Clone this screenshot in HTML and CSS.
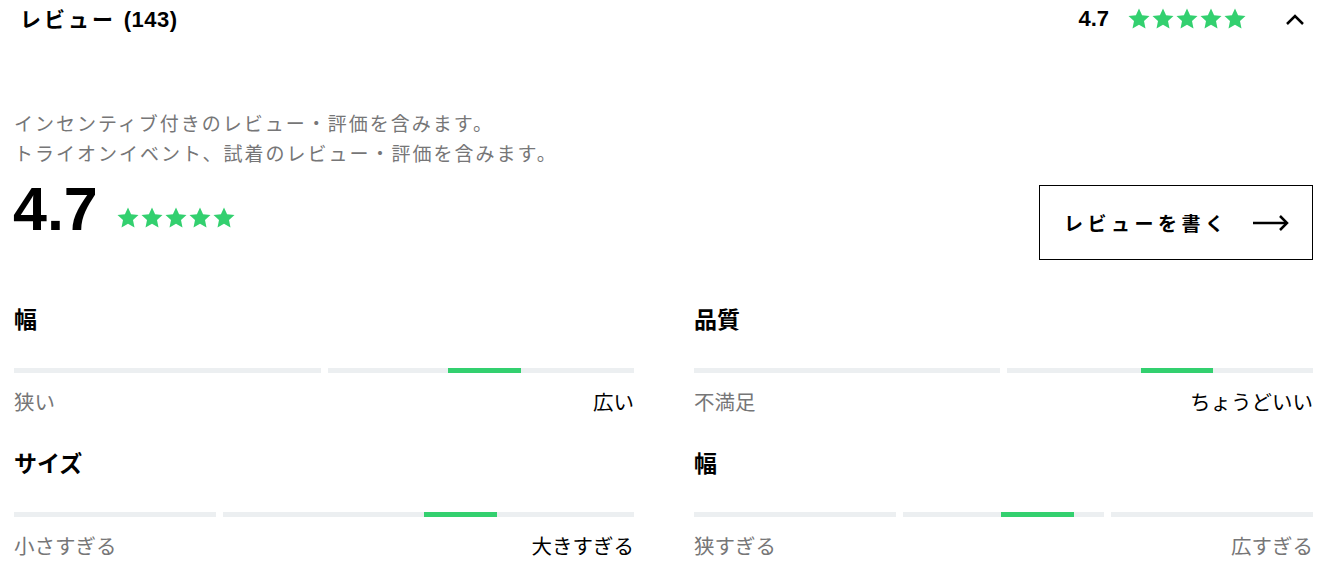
FILE: index.html
```html
<!DOCTYPE html>
<html lang="ja">
<head>
    <meta charset="UTF-8">
    <meta name="viewport" content="width=device-width, initial-scale=1.0">
    <title>レビュー</title>
    <link rel="stylesheet" href="styles.css">
</head>
<body>
    <!-- Accordion header -->
    <header class="review-head">
        <h2 class="review-title">レビュー <span class="count">(143)</span></h2>
        <div class="head-right">
            <span class="head-score">4.7</span>
            <span class="stars stars-small">
                <svg viewBox="0 0 24 24"><polygon points="12,1.5 15.1,8.3 22.5,9.1 17,14.1 18.5,21.5 12,17.8 5.5,21.5 7,14.1 1.5,9.1 8.9,8.3"/></svg>
                <svg viewBox="0 0 24 24"><polygon points="12,1.5 15.1,8.3 22.5,9.1 17,14.1 18.5,21.5 12,17.8 5.5,21.5 7,14.1 1.5,9.1 8.9,8.3"/></svg>
                <svg viewBox="0 0 24 24"><polygon points="12,1.5 15.1,8.3 22.5,9.1 17,14.1 18.5,21.5 12,17.8 5.5,21.5 7,14.1 1.5,9.1 8.9,8.3"/></svg>
                <svg viewBox="0 0 24 24"><polygon points="12,1.5 15.1,8.3 22.5,9.1 17,14.1 18.5,21.5 12,17.8 5.5,21.5 7,14.1 1.5,9.1 8.9,8.3"/></svg>
                <svg viewBox="0 0 24 24"><polygon points="12,1.5 15.1,8.3 22.5,9.1 17,14.1 18.5,21.5 12,17.8 5.5,21.5 7,14.1 1.5,9.1 8.9,8.3"/></svg>
            </span>
            <svg class="chevron" viewBox="0 0 20 14"><polyline points="2,12 10,4 18,12"/></svg>
        </div>
    </header>

    <main class="review-body">
        <p class="note">インセンティブ付きのレビュー・評価を含みます。<br>トライオンイベント、試着のレビュー・評価を含みます。</p>

        <!-- Summary -->
        <div class="summary">
            <div class="summary-score">
                <span class="big-score">4.7</span>
                <span class="stars stars-big">
                    <svg viewBox="0 0 24 24"><polygon points="12,1.5 15.1,8.3 22.5,9.1 17,14.1 18.5,21.5 12,17.8 5.5,21.5 7,14.1 1.5,9.1 8.9,8.3"/></svg>
                    <svg viewBox="0 0 24 24"><polygon points="12,1.5 15.1,8.3 22.5,9.1 17,14.1 18.5,21.5 12,17.8 5.5,21.5 7,14.1 1.5,9.1 8.9,8.3"/></svg>
                    <svg viewBox="0 0 24 24"><polygon points="12,1.5 15.1,8.3 22.5,9.1 17,14.1 18.5,21.5 12,17.8 5.5,21.5 7,14.1 1.5,9.1 8.9,8.3"/></svg>
                    <svg viewBox="0 0 24 24"><polygon points="12,1.5 15.1,8.3 22.5,9.1 17,14.1 18.5,21.5 12,17.8 5.5,21.5 7,14.1 1.5,9.1 8.9,8.3"/></svg>
                    <svg viewBox="0 0 24 24"><polygon points="12,1.5 15.1,8.3 22.5,9.1 17,14.1 18.5,21.5 12,17.8 5.5,21.5 7,14.1 1.5,9.1 8.9,8.3"/></svg>
                </span>
            </div>
            <button class="write-btn">
                <span>レビューを書く</span>
                <svg class="arrow" viewBox="0 0 38 18"><line x1="1" y1="9" x2="35" y2="9"/><polyline points="28,2 35,9 28,16"/></svg>
            </button>
        </div>

        <!-- Fit ratings -->
        <div class="ratings">
            <div class="rating">
                <h3>幅</h3>
                <div class="bar">
                    <span class="seg"></span><span class="seg"></span>
                    <span class="marker" style="left: 70%; width: 11.8%;"></span>
                </div>
                <div class="labels"><span>狭い</span><span class="on">広い</span></div>
            </div>
            <div class="rating">
                <h3>品質</h3>
                <div class="bar">
                    <span class="seg"></span><span class="seg"></span>
                    <span class="marker" style="left: 72.2%; width: 11.7%;"></span>
                </div>
                <div class="labels"><span>不満足</span><span class="on">ちょうどいい</span></div>
            </div>
            <div class="rating">
                <h3>サイズ</h3>
                <div class="bar">
                    <span class="seg"></span><span class="seg"></span><span class="seg"></span>
                    <span class="marker" style="left: 66.1%; width: 11.8%;"></span>
                </div>
                <div class="labels"><span>小さすぎる</span><span class="on">大きすぎる</span></div>
            </div>
            <div class="rating">
                <h3>幅</h3>
                <div class="bar">
                    <span class="seg"></span><span class="seg"></span><span class="seg"></span>
                    <span class="marker" style="left: 49.6%; width: 11.8%;"></span>
                </div>
                <div class="labels"><span>狭すぎる</span><span>広すぎる</span></div>
            </div>
        </div>
    </main>
</body>
</html>
```

FILE: styles.css
```css
body {
    margin: 0;
    padding: 0;
    background-color: #fff;
    color: #000;
    font-family: "Noto Sans CJK JP", "Liberation Sans", sans-serif;
}
.review-head {
    display: flex;
    justify-content: space-between;
    align-items: center;
    height: 38px;
    padding: 0 20px 0 20px;
}
.review-title {
    margin: 0;
    font-size: 21px;
    font-weight: 700;
    letter-spacing: 3px;
    line-height: 38px;
}
.review-title .count {
    font-family: "Liberation Sans", sans-serif;
    font-size: 22px;
    letter-spacing: 0.5px;
}
.head-right {
    display: flex;
    align-items: center;
}
.head-score {
    font-family: "Liberation Sans", sans-serif;
    font-weight: 700;
    font-size: 22px;
    margin-right: 18px;
}
.stars {
    display: flex;
    fill: #33d06f;
}
.stars-small svg {
    width: 24px;
    height: 24px;
}
.stars-big svg {
    width: 24px;
    height: 24px;
}
.chevron {
    width: 20px;
    height: 14px;
    margin-left: 38px;
    fill: none;
    stroke: #000;
    stroke-width: 2.5;
}
.review-body {
    padding: 0 12px 0 14px;
}
.note {
    margin: 70px 0 0;
    font-size: 19px;
    line-height: 30px;
    letter-spacing: 2px;
    color: #767677;
}
.summary {
    display: flex;
    justify-content: space-between;
    align-items: flex-start;
    margin-top: 17px;
}
.summary-score {
    display: flex;
    align-items: center;
    height: 48px;
}
.big-score {
    font-family: "Liberation Sans", sans-serif;
    font-weight: 700;
    font-size: 61px;
    line-height: 48px;
    margin-right: 18px;
    margin-left: -1px;
}
.stars-big {
    margin-top: 18px;
}
.write-btn {
    display: flex;
    align-items: center;
    justify-content: space-between;
    width: 274px;
    height: 75px;
    padding: 0 22px 0 24px;
    border: 1px solid #000;
    background: #fff;
    font-family: "Noto Sans CJK JP", sans-serif;
    font-size: 19px;
    font-weight: 700;
    letter-spacing: 4.5px;
    color: #000;
    box-sizing: border-box;
}
.arrow {
    width: 38px;
    height: 18px;
    fill: none;
    stroke: #000;
    stroke-width: 2.5;
}
.ratings {
    display: grid;
    grid-template-columns: 620px 619px;
    column-gap: 60px;
    row-gap: 32px;
    margin-top: 43px;
}
.rating h3 {
    margin: 0;
    font-size: 23px;
    font-weight: 700;
    line-height: 30px;
}
.bar {
    position: relative;
    display: flex;
    gap: 7px;
    height: 5px;
    margin-top: 35px;
}
.seg {
    flex: 1;
    background-color: #eceff1;
}
.marker {
    position: absolute;
    top: 0;
    height: 5px;
    background-color: #33d06f;
}
.labels {
    display: flex;
    justify-content: space-between;
    margin-top: 14px;
    font-size: 20.5px;
    line-height: 28px;
    font-weight: 400;
    color: #767677;
}
.labels .on {
    color: #000;
}
```
